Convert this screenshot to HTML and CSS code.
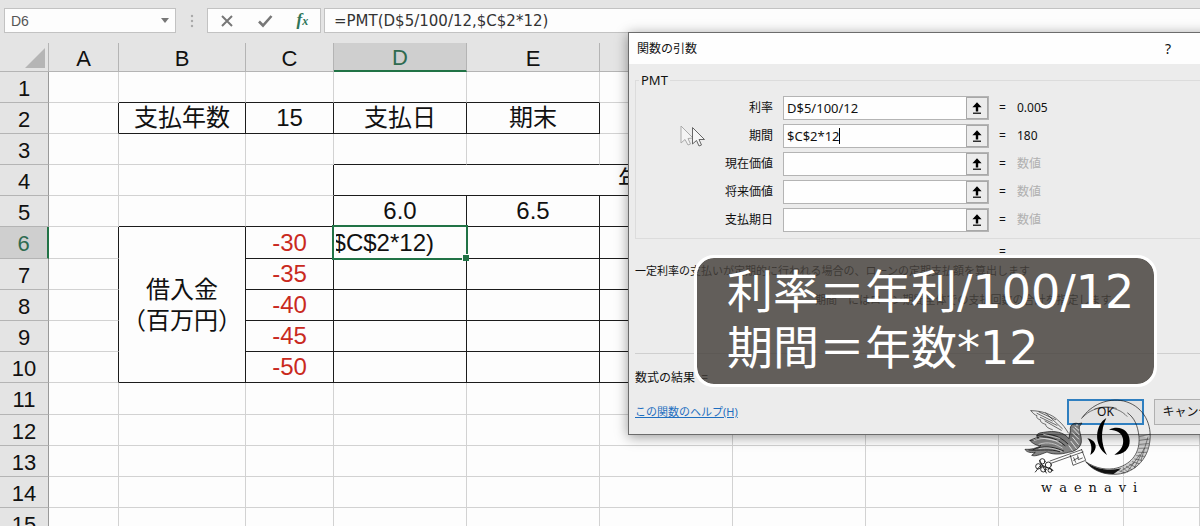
FILE: index.html
```html
<!DOCTYPE html>
<html lang="ja">
<head>
<meta charset="utf-8">
<title>関数の引数 - PMT</title>
<link rel="stylesheet" href="styles.css">
</head>
<body>
<svg class="defs" aria-hidden="true">
  <symbol id="collapse" viewBox="0 0 16 16">
    <path d="M8 2.200 12.600 7.200H9.200V11.500H6.800V7.200H3.400Z" fill="#000"/>
    <path d="M4 13.200h8" stroke="#000" stroke-width="1.200"/>
  </symbol>
</svg>
<main class="app">
  <header class="formula-bar">
    <label class="name-box">
      <input type="text" value="D6" aria-label="名前ボックス">
      <svg width="8" height="5" viewBox="0 0 8 5"><path d="M0 0h8L4 5z" fill="#777"/></svg>
    </label>
    <svg class="grip" width="4" height="14" viewBox="0 0 4 14" fill="#a8a8a8"><circle cx="2" cy="2" r="1.200"/><circle cx="2" cy="7" r="1.200"/><circle cx="2" cy="12" r="1.200"/></svg>
    <div class="tools">
      <button type="button" aria-label="キャンセル"><svg width="14" height="14" viewBox="0 0 14 14"><path d="M2 2 12 12M12 2 2 12" stroke="#777" stroke-width="2"/></svg></button>
      <button type="button" aria-label="入力"><svg width="16" height="14" viewBox="0 0 16 14"><path d="M2 7.500 6 11.500 14.500 2" fill="none" stroke="#777" stroke-width="2.600"/></svg></button>
      <button type="button" class="fx" aria-label="関数の挿入">f<small>x</small></button>
    </div>
    <input class="formula" type="text" value="=PMT(D$5/100/12,$C$2*12)" aria-label="数式バー">
  </header>

  <table class="sheet">
    <colgroup><col class="c-head"><col class="c-a"><col class="c-b"><col class="c-c"><col class="c-d"><col class="c-d"><col class="c-d"><col class="c-d"><col class="c-d"><col class="c-i"><col></colgroup>
    <thead>
      <tr><th class="corner"><svg width="20" height="20" viewBox="0 0 20 20"><path d="M20 0V20H0z" fill="#b5b5b5"/></svg></th><th>A</th><th>B</th><th>C</th><th class="current">D</th><th>E</th><th>F</th><th>G</th><th>H</th><th>I</th><th>J</th></tr>
    </thead>
    <tbody>
      <tr><th>1</th><td></td><td class="ub"></td><td class="ub"></td><td class="ub"></td><td class="ub"></td><td></td><td></td><td></td><td></td><td></td></tr>
      <tr><th>2</th><td class="rb"></td><td class="bx">支払年数</td><td class="bx">15</td><td class="bx">支払日</td><td class="bx">期末</td><td></td><td></td><td></td><td></td><td></td></tr>
      <tr><th>3</th><td></td><td></td><td></td><td class="ub"></td><td class="ub"></td><td class="ub"></td><td class="ub"></td><td class="ub"></td><td></td><td></td></tr>
      <tr><th>4</th><td></td><td></td><td class="rb"></td><td class="bx" colspan="5">年利率％</td><td></td><td></td></tr>
      <tr><th>5</th><td></td><td class="ub"></td><td class="ub rb"></td><td class="bx">6.0</td><td class="bx">6.5</td><td class="bx"></td><td class="bx"></td><td class="bx"></td><td></td><td></td></tr>
      <tr class="tall"><th class="current">6</th><td class="rb"></td><td class="bx loan" rowspan="5">借入金<br>（百万円）</td><td class="bx neg">-30</td><td class="bx active"><div class="editor"><span>$C$2*12)</span></div></td><td class="bx"></td><td class="bx"></td><td class="bx"></td><td class="bx"></td><td></td><td></td></tr>
      <tr><th>7</th><td class="rb"></td><td class="bx neg">-35</td><td class="bx"></td><td class="bx"></td><td class="bx"></td><td class="bx"></td><td class="bx"></td><td></td><td></td></tr>
      <tr><th>8</th><td class="rb"></td><td class="bx neg">-40</td><td class="bx"></td><td class="bx"></td><td class="bx"></td><td class="bx"></td><td class="bx"></td><td></td><td></td></tr>
      <tr><th>9</th><td class="rb"></td><td class="bx neg">-45</td><td class="bx"></td><td class="bx"></td><td class="bx"></td><td class="bx"></td><td class="bx"></td><td></td><td></td></tr>
      <tr><th>10</th><td class="rb"></td><td class="bx neg">-50</td><td class="bx"></td><td class="bx"></td><td class="bx"></td><td class="bx"></td><td class="bx"></td><td></td><td></td></tr>
      <tr class="tall"><th>11</th><td></td><td></td><td></td><td></td><td></td><td></td><td></td><td></td><td></td><td></td></tr>
      <tr><th>12</th><td></td><td></td><td></td><td></td><td></td><td></td><td></td><td></td><td></td><td></td></tr>
      <tr><th>13</th><td></td><td></td><td></td><td></td><td></td><td></td><td></td><td></td><td></td><td></td></tr>
      <tr><th>14</th><td></td><td></td><td></td><td></td><td></td><td></td><td></td><td></td><td></td><td></td></tr>
      <tr><th>15</th><td></td><td></td><td></td><td></td><td></td><td></td><td></td><td></td><td></td><td></td></tr>
    </tbody>
  </table>

  <section class="dialog" role="dialog" aria-labelledby="dlg-title">
    <div class="titlebar"><h1 id="dlg-title">関数の引数</h1><button type="button" class="help" aria-label="ヘルプ">?</button></div>
    <form class="dialog-body">
      <fieldset>
        <legend>PMT</legend>
        <div class="args">
          <label for="rate">利率</label><div class="ref"><input id="rate" type="text" value="D$5/100/12"><button type="button" aria-label="利率の範囲"><svg><use href="#collapse"/></svg></button></div><span>=</span><output>0.005</output>
          <label for="nper">期間</label><div class="ref"><input id="nper" type="text" value="$C$2*12"><i class="caret"></i><button type="button" aria-label="期間の範囲"><svg><use href="#collapse"/></svg></button></div><span>=</span><output>180</output>
          <label for="pv">現在価値</label><div class="ref"><input id="pv" type="text"><button type="button" aria-label="現在価値の範囲"><svg><use href="#collapse"/></svg></button></div><span>=</span><output class="hint">数値</output>
          <label for="fv">将来価値</label><div class="ref"><input id="fv" type="text"><button type="button" aria-label="将来価値の範囲"><svg><use href="#collapse"/></svg></button></div><span>=</span><output class="hint">数値</output>
          <label for="type">支払期日</label><div class="ref"><input id="type" type="text"><button type="button" aria-label="支払期日の範囲"><svg><use href="#collapse"/></svg></button></div><span>=</span><output class="hint">数値</output>
        </div>
      </fieldset>
      <p class="total">=</p>
      <p class="desc">一定利率の支払いが定期的に行われる場合の、ローンの定期支払額を算出します</p>
      <p class="desc arg">期間　にはローン期間全体での支払回数の合計を指定します</p>
      <p class="result">数式の結果 &nbsp;=</p>
      <div class="footer"><a href="#help">この関数のヘルプ(H)</a><button type="button" class="ok">OK</button><button type="button">キャンセル</button></div>
    </form>
    <svg class="pointer" width="26" height="24" viewBox="0 0 26 24" fill="#f4f4f4" stroke-linejoin="round">
      <path d="M1 1V18L5 14.500 8 20 10.500 19 8 13.500 13 13Z" stroke="#aaa"/>
      <path d="M12.500 2.500V19L16.500 15.500 19 21 21.500 20 19 14.500H24.500Z" stroke="#666"/>
    </svg>
  </section>

  <aside class="caption">利率＝年利/100/12<br>期間＝年数*12</aside>

  <div class="brand">
    <svg width="130" height="80" viewBox="70 50 390 240" fill="none" stroke="#111" stroke-linecap="round" stroke-linejoin="round">
      <!-- moon ring -->
      <path d="M246 114C275 72 325 52 372 62C425 75 456 122 451 178C446 240 400 282 342 282C305 282 275 266 258 244C290 266 325 270 352 263C398 250 422 215 418 168C414 135 404 112 384 98" stroke-width="2"/>
      <path d="M418 160C426 215 395 255 352 263C325 270 290 266 258 244C275 266 305 282 342 282C400 282 444 240 451 178Z" fill="#777" fill-opacity=".35" stroke="none"/>
      <path d="M258 244C290 270 335 272 365 264L342 281C304 282 277 266 258 244Z" fill="#111" stroke="none"/>
      <path d="M250 110C285 72 350 72 382 108M285 86C310 77 335 79 350 84" stroke-width="1.600"/>
      <path d="M370 262 384 275M380 258 396 268M390 252 407 260M398 244 418 250M405 236 426 240M411 226 434 228M415 216 440 216M418 204 444 203M420 192 447 190M420 180 449 176M420 168 450 162M350 268 376 278M364 272 402 248M384 273 421 222M404 263 433 205M424 240 445 170" stroke-width="1.300"/>
      <!-- central mark -->
      <g fill="#000" stroke="none">
        <path d="M263 174C282 178 289 190 288 201C287 211 280 219 272 224C278 205 276 188 263 174Z"/>
        <path d="M320 113C286 133 280 196 322 224C303 190 302 150 320 113Z"/>
        <path d="M328 148C360 133 389 150 390 181C391 206 371 223 344 223C365 210 373 194 370 176C367 157 352 149 328 148Z"/>
      </g>
      <!-- raised wing -->
      <path d="M94 91C128 91 158 103 174 119C190 132 198 145 206 158M94 91C99 99 106 104 112 106C109 113 116 117 122 118C121 126 131 130 138 132C138 141 150 145 158 148M112 99 158 122M122 111 172 135M136 122 185 150M138 98 188 145M118 95 168 118" stroke-width="1.800"/>
      <!-- head, body and tail -->
      <path d="M212 150C209 132 224 126 236 130L247 128 239 139C236 150 247 166 245 185C243 203 226 213 207 216C180 224 155 222 142 215C119 224 106 229 96 225L107 216C91 219 79 214 76 207C94 208 109 204 124 196C111 197 98 189 90 180C102 181 109 178 116 174C107 165 111 158 132 156C165 150 192 155 207 174Z" fill="#333" fill-opacity=".6" stroke-width="2"/>
      <path d="M92 180C120 164 160 164 196 196M112 166C140 156 176 162 204 190M100 208C130 194 160 198 192 212M88 209C120 212 150 204 180 214" stroke-width="2.400"/>
      <path d="M103 181C133 168 160 175 186 192M118 192C145 182 168 190 188 203M118 205C147 199 168 206 186 213M132 162 180 174M120 172 176 182" stroke="#e4e4e4" stroke-width="2"/>
      <path d="M221 145 238 163M218 157 237 176M219 171 236 192M214 183 230 204M226 140 238 150M208 196 218 210" stroke="#f2f2f2" stroke-width="2.600"/>
      <circle cx="232" cy="134" r="2" fill="#fff" stroke="none"/>
      <!-- key -->
      <path d="M151 242 246 208M154 249 250 215M212 225 220 255 258 240 246 208M222 232 228 246M234 226 236 238 248 233M222 240 236 232" stroke-width="2"/>
      <g stroke-width="2.600"><circle cx="128" cy="243" r="8"/><circle cx="116" cy="258" r="8"/><circle cx="131" cy="267" r="8"/><circle cx="146" cy="254" r="9"/><circle cx="151" cy="270" r="6"/><path d="M107 275 124 253 160 270M120 240 140 278"/></g>
    </svg>
    <span>waenavi</span>
  </div>
</main>
</body>
</html>
```
FILE: styles.css
```css
* { box-sizing: border-box; }
body {
  margin: 0;
  background: #fdfdfd;
  color: #111;
  font-family: "Liberation Sans", "Noto Sans CJK JP", sans-serif;
}
button, input { font: inherit; color: inherit; }
.defs { display: none; }
.app { position: relative; height: 100vh; overflow: hidden; }

/* formula bar */
.formula-bar {
  display: flex;
  align-items: flex-start;
  padding: 8px 0 10px 4px;
  background: #e4e4e4;
}
.name-box, .tools, .formula {
  height: 25px;
  border: 1px solid #c2c2c2;
  background: #fdfdfd;
}
.name-box { display: flex; align-items: center; width: 172px; padding: 0 6px; }
.name-box input {
  flex: 1;
  min-width: 0;
  padding: 0;
  border: 0;
  background: none;
  color: #555;
  font-size: 14px;
}
.grip { margin: 6px 13px 0 14px; }
.tools { display: flex; align-items: center; justify-content: space-around; width: 114px; }
.tools button { display: flex; padding: 0; border: 0; background: none; }
.tools .fx {
  align-items: baseline;
  color: #2f7558;
  font: italic bold 17px/18px "Liberation Serif", serif;
}
.fx small { font-size: 12px; }
.formula {
  flex: 1;
  min-width: 0;
  margin-left: 3px;
  padding: 0 9px;
  border-right: 0;
  color: #333;
  font-family: "DejaVu Sans", sans-serif;
  font-size: 15px;
}

/* worksheet */
.sheet {
  width: 100%;
  table-layout: fixed;
  border-spacing: 0;
  font-size: 24px;
  line-height: 28px;
}
.c-head { width: 49px; }
.c-a { width: 70px; }
.c-b { width: 127px; }
.c-c { width: 88px; }
.c-d { width: 133px; }
.c-i { width: 125px; }
.sheet tr { height: 31px; }
.sheet .tall { height: 32px; }
.sheet thead tr { height: 29px; }
.sheet th, .sheet td {
  padding: 0;
  border: 0 solid #d2d2d2;
  border-width: 0 1px 1px 0;
  text-align: center;
  white-space: nowrap;
}
.sheet th {
  padding-top: 3px;
  border-color: #b4b4b4;
  background: #e4e4e4;
  font-size: 22px;
  font-weight: 400;
  line-height: 24px;
}
.sheet tbody th { border-right-color: #999; }
.sheet .corner { padding: 0 3px 0 0; text-align: right; }
.corner svg { display: inline-block; vertical-align: middle; }
.sheet th.current { background: #cfcfcf; color: #2f6b50; }
.sheet thead .current { border-bottom: 2px solid #217346; }
.sheet tbody .current { border-right: 2px solid #217346; }
.sheet .bx { border-color: #1c1c1c; }
.sheet .ub { border-bottom-color: #1c1c1c; }
.sheet .rb { border-right-color: #1c1c1c; }
.sheet .neg { color: #c92a1e; }
.sheet .loan { line-height: 31px; }
.sheet .active { position: relative; }
.editor {
  position: absolute;
  inset: -2px;
  display: flex;
  align-items: center;
  padding: 0 32px 0 2px;
  border: 2px solid #217346;
  background: #fdfdfd;
}
.editor span {
  flex: 1;
  display: flex;
  justify-content: flex-end;
  min-width: 0;
  overflow: hidden;
}
.active::after {
  content: "";
  position: absolute;
  right: -3px;
  bottom: -3px;
  width: 6px;
  height: 6px;
  border: 1px solid #fdfdfd;
  border-width: 1px 0 0 1px;
  background: #217346;
}

/* function arguments dialog */
.dialog {
  position: absolute;
  left: 628px;
  right: -42px;
  top: 32px;
  border: 1px solid #6c6c6c;
  background: #ececec;
  box-shadow: 0 2px 12px rgba(0, 0, 0, .4);
  font-family: "Noto Sans", "Noto Sans CJK JP", sans-serif;
  font-size: 12px;
  line-height: 16px;
}
.titlebar {
  display: flex;
  align-items: center;
  justify-content: space-between;
  height: 31px;
  padding: 0 70px 0 8px;
  background: #fefefe;
}
.titlebar h1 { margin: 0; font-size: 12px; font-weight: 400; }
.help { padding: 0; border: 0; background: none; font-size: 14px; }
.dialog-body { padding: 8px 10px 9px 6px; }
fieldset { margin: 0; padding: 8px 0 6px; border: 1px solid #dcdcdc; }
legend { margin-left: 3px; padding: 0 2px; font-size: 13px; }
.args {
  display: grid;
  grid-template-columns: 137px 206px 8px 1fr;
  align-items: center;
  gap: 4px 10px;
}
.args label { text-align: right; }
.args .hint { color: #b0b0b0; }
.ref {
  position: relative;
  display: flex;
  align-items: center;
  height: 24px;
  border: 1px solid #b4b4b4;
  background: #fefefe;
}
.ref input {
  flex: 1;
  min-width: 0;
  padding: 0 3px;
  border: 0;
  background: none;
  font-size: 13px;
}
.ref button {
  display: flex;
  align-items: center;
  justify-content: center;
  width: 22px;
  height: 22px;
  padding: 0;
  border: 1px solid #a8a8a8;
  background: #ececec;
}
.ref svg { width: 16px; height: 16px; }
.caret { position: absolute; left: 55px; top: 3px; width: 1px; height: 16px; background: #000; }
.dialog p { margin: 0; }
.dialog .total { padding: 5px 0 0 364px; }
.dialog .desc { margin-top: 2px; font-size: 11px; line-height: 18px; white-space: nowrap; }
.dialog .arg { margin: 11px 0 44px; padding-left: 180px; }
.dialog .result { padding: 16px 0 13px; border-top: 1px solid #cfcfcf; }
.footer { display: flex; align-items: center; gap: 10px; }
.footer a { margin-right: auto; color: #1f6fc0; font-size: 11px; }
.footer button {
  width: 77px;
  height: 26px;
  padding: 0;
  border: 1px solid #b0b0b0;
  background: #e2e2e2;
}
.footer .ok { border: 2px solid #2f7fc0; }
.pointer { position: absolute; left: 51px; top: 92px; }

/* caption laid over the dialog */
.caption {
  position: absolute;
  left: 694px;
  top: 255px;
  padding: 6px 20px 8px 30px;
  border: 3px solid #fff;
  border-radius: 20px;
  background: rgba(70, 65, 60, .83);
  background-clip: padding-box;
  color: #fff;
  font-family: "DejaVu Sans", "Noto Sans CJK JP", sans-serif;
  font-size: 46px;
  line-height: 56px;
  white-space: nowrap;
}

/* channel logo */
.brand {
  position: absolute;
  left: 1023px;
  top: 397px;
  display: flex;
  flex-direction: column;
}
.brand span {
  padding-left: 18px;
  font-family: "DejaVu Serif", serif;
  font-size: 13px;
  line-height: 22px;
  letter-spacing: 7px;
}
```
